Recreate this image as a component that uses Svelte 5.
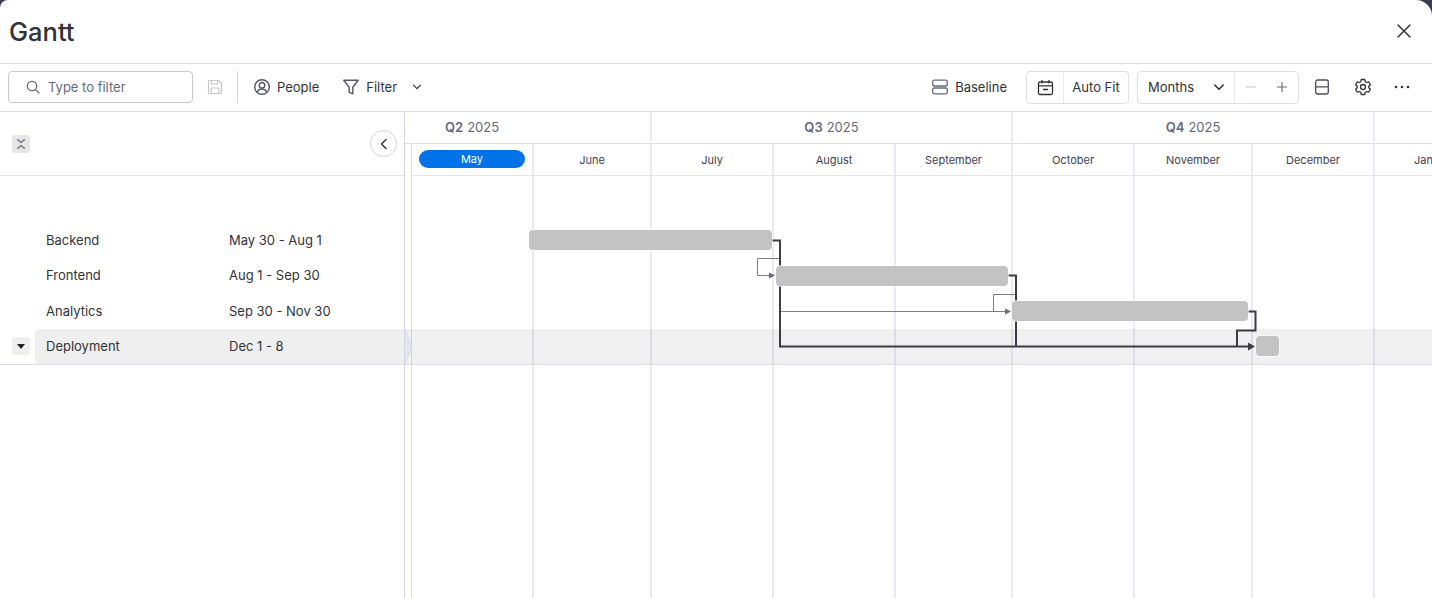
<script lang="ts">
  const quarters = [
    { q: 'Q2', w: 247 },
    { q: 'Q3', w: 361 },
    { q: 'Q4', w: 362 }
  ];
  const months = [
    { name: 'May', w: 122, active: true },
    { name: 'June', w: 118 },
    { name: 'July', w: 122 },
    { name: 'August', w: 122 },
    { name: 'September', w: 117 },
    { name: 'October', w: 122 },
    { name: 'November', w: 118 },
    { name: 'December', w: 122 },
    { name: 'January', w: 122 }
  ];
  const tasks = [
    { name: 'Backend', dates: 'May 30 - Aug 1', x: 124, y: 7, w: 243, h: 35 },
    { name: 'Frontend', dates: 'Aug 1 - Sep 30', x: 371, y: 8, w: 232, h: 35 },
    { name: 'Analytics', dates: 'Sep 30 - Nov 30', x: 607, y: 8, w: 236, h: 36 },
    { name: 'Deployment', dates: 'Dec 1 - 8', x: 851, y: 7, w: 23, h: 36, current: true }
  ];
</script>

<div class="modal">
  <header class="title-bar">
    <h1>Gantt</h1>
    <button class="icon-btn close" aria-label="Close">
      <svg width="16" height="16" viewBox="0 0 16 16" fill="none" stroke="#323338" stroke-width="1.5" stroke-linecap="round"><path d="M2 2 14 14M14 2 2 14" /></svg>
    </button>
  </header>

  <div class="toolbar">
    <div class="search">
      <svg width="16" height="16" viewBox="0 0 16 16" fill="none" stroke="#676879" stroke-width="1.3" stroke-linecap="round"><circle cx="7" cy="7" r="4.7" /><path d="m10.6 10.6 3.4 3.4" /></svg>
      <span>Type to filter</span>
    </div>
    <svg class="save" width="16" height="16" viewBox="0 0 16 16" fill="none" stroke="#c8c8cc" stroke-width="1.2" stroke-linejoin="round"><path d="M1.5 2.5a1 1 0 0 1 1-1h9l3 3v9a1 1 0 0 1-1 1h-11a1 1 0 0 1-1-1z" /><path d="M4.5 1.5v3.5h6v-3.5M4 14.500v-5.500h8v5.500" /></svg>
    <span class="divider"></span>
    <div class="tool people">
      <svg width="18" height="18" viewBox="0 0 18 18" fill="none" stroke="#55566a" stroke-width="1.4"><circle cx="9" cy="9" r="7.3" /><circle cx="9" cy="7.300" r="2.800" /><path d="M4.200 14.300c.9-2.300 2.700-3.300 4.800-3.300s3.900 1 4.800 3.300" /></svg>
      <span>People</span>
    </div>
    <div class="tool filter">
      <svg width="18" height="18" viewBox="0 0 18 18" fill="none" stroke="#55566a" stroke-width="1.4" stroke-linejoin="round"><path d="M1.800 2.200h14.400l-5.400 7v6.600l-3.600-1.700v-4.900z" /></svg>
      <span>Filter</span>
      <svg class="caret" width="10" height="10" viewBox="0 0 10 10" fill="none" stroke="#323338" stroke-width="1.2" stroke-linecap="round" stroke-linejoin="round"><path d="m1.500 3.200 3.500 3.500 3.500-3.500" /></svg>
    </div>

    <div class="spacer"></div>

    <div class="tool baseline">
      <svg width="16" height="16" viewBox="0 0 16 16" fill="none" stroke="#676879" stroke-width="1.3"><rect x="0.700" y="1.200" width="14.600" height="5.800" rx="1.500" /><rect x="0.700" y="9" width="14.600" height="5.800" rx="1.500" /></svg>
      <span>Baseline</span>
    </div>
    <div class="group autofit">
      <div class="cell cal">
        <svg width="17" height="17" viewBox="0 0 17 17" fill="none" stroke="#323338" stroke-width="1.300"><rect x="1.500" y="3" width="14" height="12.500" rx="1.500" /><path d="M1.500 6.800h14M5 1v3.500M12 1v3.500M6 10.500h5" /></svg>
      </div>
      <div class="cell text">Auto Fit</div>
    </div>
    <div class="group zoom">
      <div class="cell months">
        <span>Months</span>
        <svg width="12" height="12" viewBox="0 0 12 12" fill="none" stroke="#323338" stroke-width="1.600" stroke-linecap="round" stroke-linejoin="round"><path d="m1.800 4 4.200 4.200 4.200-4.200" /></svg>
      </div>
      <div class="cell steps">
        <svg width="12" height="12" viewBox="0 0 12 12" stroke="#c9c9ce" stroke-width="1.100"><path d="M1 6h10" /></svg>
        <svg width="12" height="12" viewBox="0 0 12 12" stroke="#676879" stroke-width="1.100"><path d="M1 6h10M6 1v10" /></svg>
      </div>
    </div>
    <svg class="layout" width="16" height="16" viewBox="0 0 16 16" fill="none" stroke="#4b4c5c" stroke-width="1.300"><rect x="1.700" y="1" width="12.600" height="14" rx="2" /><path d="M1.700 7.800h12.600" /></svg>
    <svg class="gear" width="18" height="18" viewBox="0 0 18 18" fill="none" stroke="#323338" stroke-width="1.300" stroke-linejoin="round"><path d="M7.300 1.500h3.400l.5 2.200 1.300.8 2.200-.7 1.700 3-1.600 1.500v1.400l1.600 1.500-1.700 3-2.200-.7-1.300.8-.5 2.200H7.300l-.5-2.200-1.300-.8-2.200.7-1.700-3 1.600-1.500V8.300L1.600 6.800l1.700-3 2.200.7 1.300-.8z" /><circle cx="9" cy="9" r="2.500" /></svg>
    <svg class="dots" width="16" height="4" viewBox="0 0 16 4" fill="#323338"><circle cx="2" cy="2" r="1.300" /><circle cx="8" cy="2" r="1.300" /><circle cx="14" cy="2" r="1.300" /></svg>
  </div>

  <div class="gantt">
    <aside class="side">
      <div class="side-head">
        <span class="mini collapse">
          <svg width="10" height="12" viewBox="0 0 10 12" fill="none" stroke="#676879" stroke-width="1.100" stroke-linecap="round" stroke-linejoin="round"><path d="m1.500 1.500 3.500 3 3.500-3M1.500 10.500l3.500-3 3.500 3" /></svg>
        </span>
        <button class="back" aria-label="Collapse">
          <svg width="10" height="12" viewBox="0 0 10 12" fill="none" stroke="#323338" stroke-width="1.500" stroke-linecap="round" stroke-linejoin="round"><path d="M7 1.500 2.500 6 7 10.500" /></svg>
        </button>
      </div>
      <div class="side-body">
        {#each tasks as task}
          <div class="row" class:current={task.current} style="height: {task.h}px">
            {#if task.current}
              <span class="mini expand"><i></i></span>
            {/if}
            <div class="row-inner">
              <span class="task-name">{task.name}</span>
              <span class="task-dates">{task.dates}</span>
            </div>
          </div>
        {/each}
      </div>
    </aside>

    <div class="timeline">
      <div class="quarters">
        {#each quarters as q}
          <div class="quarter" style="width: {q.w}px"><b>{q.q}</b> 2025</div>
        {/each}
      </div>
      <div class="months-row">
        {#each months as m}
          <div class="month" style="width: {m.w}px">
            {#if m.active}<span class="pill">{m.name}</span>{:else}{m.name}{/if}
          </div>
        {/each}
      </div>
      <div class="chart">
        <div class="grid">
          {#each months as m}
            <div class="col" style="width: {m.w}px"></div>
          {/each}
        </div>
        <div class="bands">
          {#each tasks as task}
            <div class="band" class:current={task.current} style="height: {task.h}px"></div>
          {/each}
        </div>
        <svg class="links" width="1027" height="422" viewBox="405 176 1027 422" fill="none">
          <path class="notch" d="M405 329.500 411.500 346.500 405 364" />
          <g stroke="#7c7c8a" stroke-width="1">
            <path d="M780 258.500H757.500V275.500H772" />
            <path d="M780 311.500H1006" />
            <path d="M1016 294.500H993.500V311.500H1006" />
          </g>
          <g fill="#676879">
            <path d="M769 272.500l6 3-6 3z" />
            <path d="M1005 308.500l6 3-6 3z" />
          </g>
          <g stroke="#3c3c44" stroke-width="2">
            <path d="M772 240.500H780V346.500H1250" />
            <path d="M1008 275.500H1016V346.500" />
            <path d="M1248 311.500H1255.500V330.500H1237V346.500" />
          </g>
          <path d="M1248 342.500l7 4-7 4z" fill="#3c3c44" />
        </svg>
        <div class="bars">
          {#each tasks as task}
            <div class="bar-row" style="height: {task.h}px">
              <span class="bar" style="left: {task.x}px; top: {task.y}px; width: {task.w}px"></span>
            </div>
          {/each}
        </div>
      </div>
    </div>
  </div>
</div>

<style>
  :global(body) {
    margin: 0;
    background: #3a3d52;
    font-family: "Inter", "Liberation Sans", sans-serif;
    color: #323338;
  }

  .modal {
    width: 1432px;
    height: 598px;
    overflow: hidden;
    background: #fff;
    border-radius: 8px 16px 0 0;
    display: flex;
    flex-direction: column;
  }

  .title-bar {
    height: 64px;
    flex: none;
    display: flex;
    align-items: center;
    justify-content: space-between;
    padding: 0 20px 1px 9px;
    box-sizing: border-box;
    border-bottom: 1px solid #dcdeeb;
  }

  h1 {
    margin: 0;
    font-size: 25.500px;
    font-weight: 500;
    color: #323338;
  }

  .icon-btn {
    border: 0;
    background: none;
    padding: 0;
    display: flex;
  }

  .toolbar {
    height: 48px;
    flex: none;
    box-sizing: border-box;
    border-bottom: 1px solid #dcdeeb;
    display: flex;
    align-items: center;
    padding: 0 22px 1px 8px;
    font-size: 13px;
  }

  .search {
    width: 185px;
    height: 32px;
    box-sizing: border-box;
    border: 1px solid #c5c7d4;
    border-radius: 4px;
    display: flex;
    align-items: center;
    gap: 7px;
    padding-left: 16px;
    color: #676879;
  }

  .save {
    margin-left: 14px;
  }

  .divider {
    width: 1px;
    height: 32px;
    background: #d0d4e4;
    margin-left: 14px;
  }

  .tool {
    display: flex;
    align-items: center;
    gap: 6px;
    color: #323338;
  }

  .people {
    margin-left: 15px;
  }

  .filter {
    margin-left: 23px;
  }

  .caret {
    margin-left: 9px;
  }

  .spacer {
    flex: 1;
  }

  .baseline {
    gap: 7px;
  }

  .group {
    height: 33px;
    box-sizing: border-box;
    border: 1px solid #dcdeeb;
    border-radius: 4px;
    display: flex;
    align-items: stretch;
  }

  .cell {
    display: flex;
    align-items: center;
  }

  .autofit {
    width: 103px;
    margin-left: 19px;
  }

  .cal {
    width: 36px;
    flex: none;
    justify-content: center;
    border-right: 1px solid #e6e9ef;
  }

  .text {
    flex: 1;
    justify-content: center;
  }

  .zoom {
    width: 162px;
    margin-left: 8px;
  }

  .months {
    width: 97px;
    flex: none;
    box-sizing: border-box;
    padding: 0 9px 0 10px;
    justify-content: space-between;
    border-right: 1px solid #e6e9ef;
  }

  .steps {
    flex: 1;
    box-sizing: border-box;
    padding: 0 10px 0 10px;
    justify-content: space-between;
  }

  .layout {
    margin-left: 15px;
  }

  .gear {
    margin-left: 24px;
  }

  .dots {
    margin-left: 22px;
  }

  .gantt {
    flex: 1;
    display: flex;
    min-height: 0;
  }

  .side {
    width: 404px;
    flex: none;
    border-right: 1px solid #d0d4e4;
  }

  .side-head {
    height: 64px;
    box-sizing: border-box;
    border-bottom: 1px solid #e3e3f5;
    display: flex;
    align-items: center;
    justify-content: space-between;
    padding: 0 7px 0 12px;
  }

  .mini {
    width: 18px;
    height: 18px;
    border-radius: 3px;
    background: #e6e6e6;
    display: flex;
    align-items: center;
    justify-content: center;
  }

  .back {
    width: 27px;
    height: 27px;
    padding: 0;
    border-radius: 50%;
    border: 1px solid #d0d4e4;
    background: #fff;
    display: flex;
    align-items: center;
    justify-content: center;
  }

  .side-body {
    padding-top: 47px;
  }

  .row {
    display: flex;
    align-items: center;
    box-sizing: border-box;
    position: relative;
    font-size: 13px;
  }

  .row.current {
    border-bottom: 1px solid #dcdcf0;
  }

  .row-inner {
    flex: 1;
    margin-left: 35px;
    align-self: stretch;
    display: flex;
    align-items: center;
    box-sizing: border-box;
    padding: 0 0 1px 11px;
    border-radius: 4px 0 0 4px;
  }

  .row.current .row-inner {
    background: #efefef;
  }

  .expand {
    position: absolute;
    left: 12px;
    top: 8px;
    background: #efefef;
  }

  .expand i {
    width: 0;
    height: 0;
    border-left: 4px solid transparent;
    border-right: 4px solid transparent;
    border-top: 5px solid #222;
  }

  .task-name {
    width: 183px;
    color: #323338;
  }

  .timeline {
    flex: 1;
    min-width: 0;
    display: flex;
    flex-direction: column;
    overflow: hidden;
  }

  .quarters {
    height: 32px;
    flex: none;
    box-sizing: border-box;
    border-bottom: 1px solid #dcdeeb;
    display: flex;
    padding-bottom: 1px;
  }

  .quarter {
    flex: none;
    box-sizing: border-box;
    border-right: 2px solid #e9eaf3;
    display: flex;
    align-items: center;
    justify-content: center;
    gap: 4px;
    font-size: 13px;
    color: #676879;
  }

  .quarter:first-child {
    justify-content: flex-start;
    padding-left: 40px;
  }

  .quarter b {
    font-weight: 600;
  }

  .months-row {
    height: 32px;
    flex: none;
    box-sizing: border-box;
    border-bottom: 1px solid #e3e3f5;
    display: flex;
    margin-left: 6px;
    border-left: 1px solid #dcdeeb;
    width: max-content;
    min-width: 100%;
  }

  .month {
    flex: none;
    box-sizing: border-box;
    border-right: 2px solid #e9eaf3;
    display: flex;
    align-items: center;
    justify-content: center;
    font-size: 11px;
    color: #3f4050;
  }

  .pill {
    width: 106px;
    height: 18px;
    margin-top: -1px;
    border-radius: 9px;
    background: #0073ea;
    color: #fff;
    display: flex;
    align-items: center;
    justify-content: center;
  }

  .chart {
    flex: 1;
    position: relative;
    overflow: hidden;
  }

  .grid {
    position: absolute;
    inset: 0 0 0 6px;
    display: flex;
    border-left: 1px solid #dcdeeb;
  }

  .col {
    flex: none;
    box-sizing: border-box;
    border-right: 2px solid #e9eaf3;
  }

  .bands {
    position: relative;
    padding-top: 47px;
  }

  .band.current {
    background: rgba(0, 0, 0, 0.06);
    box-sizing: border-box;
    border-bottom: 1px solid #dcdcf0;
  }

  .links {
    position: absolute;
    left: 0;
    top: 0;
    pointer-events: none;
  }

  .notch {
    stroke: #d4d6e6;
    fill: #e6e6ec;
  }

  .bars {
    position: absolute;
    top: 47px;
    left: 0;
    right: 0;
  }

  .bar-row {
    position: relative;
  }

  .bar {
    position: absolute;
    height: 20px;
    background: #c3c3c3;
    border-radius: 4px;
    box-shadow: 0 0 0 1px rgba(255, 255, 255, 0.6);
  }
</style>
